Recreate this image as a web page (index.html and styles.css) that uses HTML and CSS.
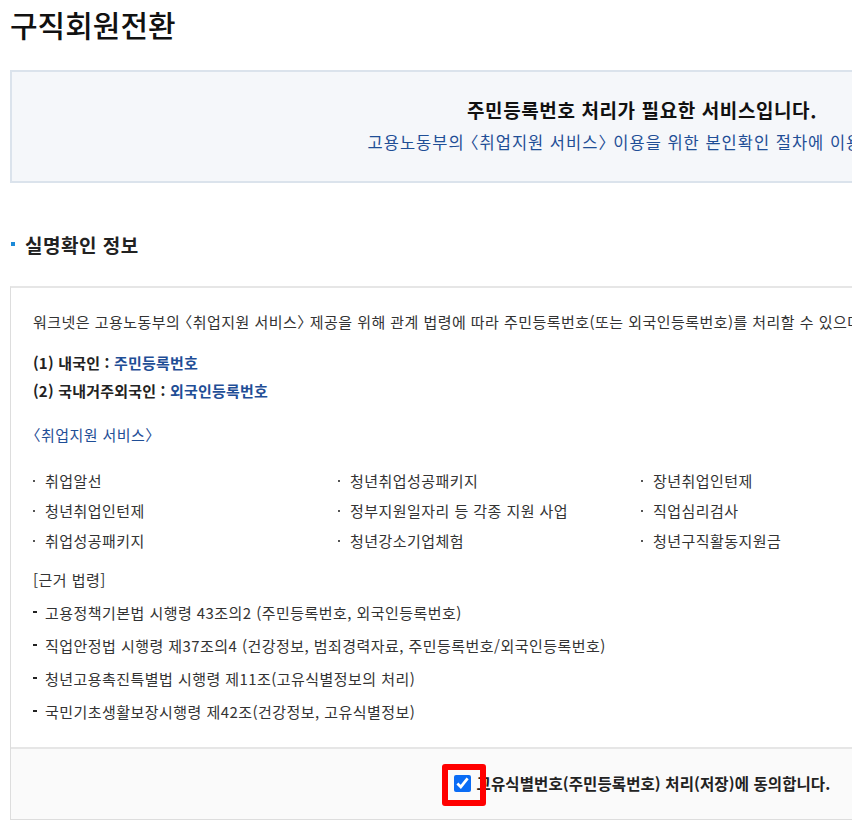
FILE: index.html
```html
<!DOCTYPE html>
<html lang="ko">
<head>
<meta charset="utf-8">
<title>구직회원전환</title>
<link rel="stylesheet" href="styles.css">
</head>
<body>
<div class="page">
  <h1 class="page-title">구직회원전환</h1>

  <div class="notice">
    <p class="notice-title">주민등록번호 처리가 필요한 서비스입니다.</p>
    <p class="notice-desc">고용노동부의 〈취업지원 서비스〉 이용을 위한 본인확인 절차에 이용됩니다.</p>
  </div>

  <h2 class="section-title">실명확인 정보</h2>

  <div class="panel">
    <div class="panel-body">
      <p class="intro">워크넷은 고용노동부의 〈취업지원 서비스〉 제공을 위해 관계 법령에 따라 주민등록번호(또는 외국인등록번호)를 처리할 수 있으며, 이에 대한 동의를 받고 있습니다.</p>
      <p class="kind">(1) 내국인 : <span class="blue">주민등록번호</span></p>
      <p class="kind">(2) 국내거주외국인 : <span class="blue">외국인등록번호</span></p>
      <p class="svc-title">〈취업지원 서비스〉</p>
      <ul class="svc-list">
        <li>취업알선</li>
        <li>청년취업성공패키지</li>
        <li>장년취업인턴제</li>
        <li>청년취업인턴제</li>
        <li>정부지원일자리 등 각종 지원 사업</li>
        <li>직업심리검사</li>
        <li>취업성공패키지</li>
        <li>청년강소기업체험</li>
        <li>청년구직활동지원금</li>
      </ul>
      <p class="law-title">[근거 법령]</p>
      <ul class="law-list">
        <li>고용정책기본법 시행령 43조의2 (주민등록번호, 외국인등록번호)</li>
        <li>직업안정법 시행령 제37조의4 (건강정보, 범죄경력자료, 주민등록번호/외국인등록번호)</li>
        <li>청년고용촉진특별법 시행령 제11조(고유식별정보의 처리)</li>
        <li>국민기초생활보장시행령 제42조(건강정보, 고유식별정보)</li>
      </ul>
    </div>
    <div class="panel-foot">
      <label class="agree">
        <span class="check-wrap">
          <input type="checkbox" class="check" checked>
          <span class="highlight"></span>
        </span>
        <span class="agree-text">고유식별번호(주민등록번호) 처리(저장)에 동의합니다.</span>
      </label>
    </div>
  </div>
</div>
</body>
</html>
```

FILE: styles.css
```css
html, body {
  margin: 0;
  padding: 0;
  background: #ffffff;
  overflow: hidden;
}

body {
  font-family: "Noto Sans CJK KR", "Noto Sans", sans-serif;
  font-feature-settings: "halt";
  color: #333333;
}

p, h1, h2, ul {
  margin: 0;
  padding: 0;
}

.page {
  width: 1264px;
  padding-left: 10px;
}

.page-title {
  margin-top: 4px;
  font-size: 30px;
  line-height: 40px;
  font-weight: 500;
  color: #111111;
  letter-spacing: 0;
}

.notice {
  margin-top: 26px;
  border: 2px solid #dbe3ec;
  background: #f5f7fa;
  padding: 24px 0 27px;
  text-align: center;
}

.notice-title {
  font-size: 19px;
  line-height: 28px;
  font-weight: 700;
  color: #111111;
  letter-spacing: 0.6px;
}

.notice-desc {
  margin-top: 6px;
  font-size: 16.5px;
  line-height: 24px;
  color: #1f4e96;
  letter-spacing: 1px;
}

.section-title {
  margin-top: 48px;
  font-size: 19px;
  line-height: 28px;
  font-weight: 700;
  color: #222222;
  display: flex;
  align-items: center;
  gap: 10px;
  padding-left: 1px;
  letter-spacing: 0.5px;
}

.section-title::before {
  content: "";
  width: 4px;
  height: 4px;
  background: #1c8ad8;
  margin-top: -2px;
}

.panel {
  margin-top: 27px;
  border-top: 2px solid #e6e6e6;
  border-left: 1px solid #dddddd;
  border-right: 1px solid #dddddd;
  border-bottom: 1px solid #dddddd;
}

.panel-body {
  padding: 23px 22px 24px;
}

.intro {
  font-size: 15px;
  line-height: 22px;
  white-space: nowrap;
  color: #333333;
  letter-spacing: 0.45px;
}

.kind {
  font-size: 15px;
  line-height: 28px;
  font-weight: 700;
  color: #222222;
  letter-spacing: 0.2px;
}

.intro + .kind {
  margin-top: 16px;
}

.blue {
  color: #1f4e96;
}

.svc-title {
  margin-top: 19px;
  font-size: 15px;
  line-height: 22px;
  color: #1f4e96;
  letter-spacing: 0.45px;
}

.svc-list {
  list-style: none;
  margin-top: 20px;
  display: grid;
  grid-template-columns: 305px 303px 303px;
}

.svc-list li {
  font-size: 15px;
  line-height: 30px;
  color: #333333;
  display: flex;
  align-items: center;
  letter-spacing: 0.45px;
}

.svc-list li::before {
  content: "";
  width: 2px;
  height: 2px;
  background: #555555;
  margin-right: 10px;
}

.law-title {
  margin-top: 13px;
  font-size: 15px;
  line-height: 22px;
  color: #333333;
  letter-spacing: 0.45px;
}

.law-list {
  list-style: none;
  margin-top: 11px;
  display: flex;
  flex-direction: column;
  gap: 11px;
}

.law-list li {
  font-size: 15px;
  line-height: 22px;
  color: #333333;
  display: flex;
  align-items: center;
  letter-spacing: 0.45px;
}

.law-list li::before {
  content: "";
  width: 4px;
  height: 2px;
  background: #222222;
  margin-right: 8px;
  margin-top: -3px;
}

.panel-foot {
  border-top: 2px solid #e6e6e6;
  background: #fafafa;
  padding: 23px 0 22px;
  text-align: center;
}

.agree {
  display: inline-flex;
  align-items: center;
  gap: 6px;
}

.check-wrap {
  position: relative;
  display: inline-flex;
}

.check {
  width: 17px;
  height: 17px;
  margin: 0;
  accent-color: #0a6cf5;
}

.highlight {
  position: absolute;
  left: -12px;
  top: -11px;
  width: 32px;
  height: 30px;
  border: 6px solid #ff0000;
  border-radius: 3px;
  z-index: 2;
  pointer-events: none;
}

.agree-text {
  font-size: 15.5px;
  line-height: 22px;
  font-weight: 700;
  color: #222222;
  letter-spacing: 0.1px;
}
```
